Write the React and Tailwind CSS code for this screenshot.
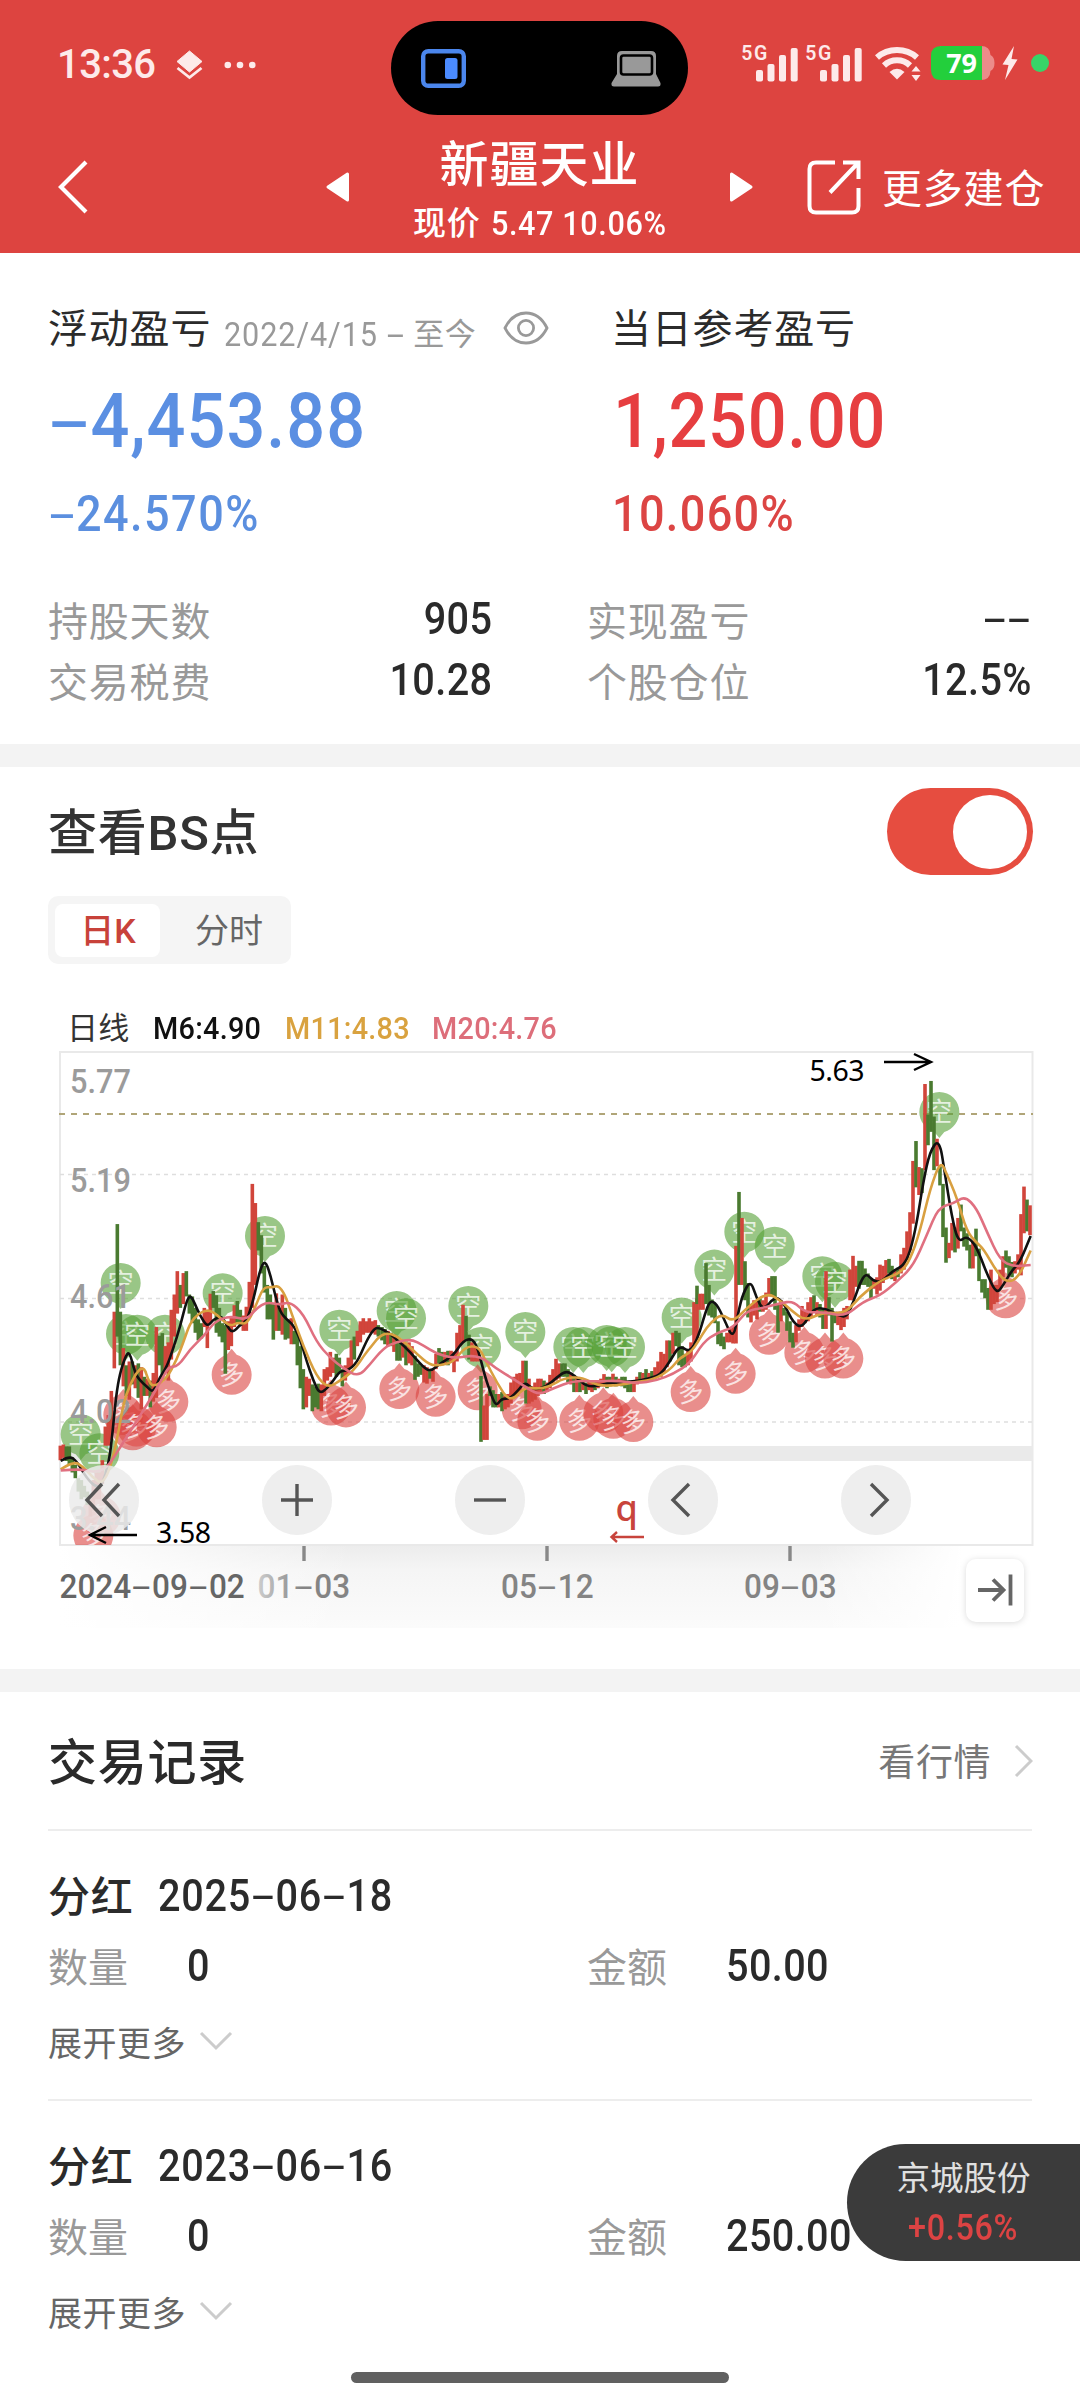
import React from "react";

const CJK = "font-['Roboto','Noto_Sans_CJK_SC',sans-serif]";

/* Numeric text, narrowed and with the wide hyphens of a DIN-style face. */
function Num({ children, className = "" }) {
  const parts = String(children).split("-");
  return (
    <span className={"block origin-left scale-x-[0.9] whitespace-nowrap font-medium leading-none tracking-[0.01em] " + className}>
      {parts.map((p, i) => (
        <React.Fragment key={i}>
          {i > 0 && <span className="inline-block w-[0.62em] scale-x-[2.05] text-center font-normal tracking-normal">-</span>}
          {p}
        </React.Fragment>
      ))}
    </span>
  );
}

function Signal() {
  return (
    <svg width="57" height="38" viewBox="0 0 57 38" fill="#fdeaea" className="shrink-0 overflow-visible">
      <text x="-0.8" y="15.5" fontSize="19.5" fontWeight="600" fontFamily="Roboto" textLength="26">5G</text>
      <rect x="14" y="26" width="7" height="11.5" rx="2" />
      <rect x="25.5" y="20" width="7" height="17.5" rx="2" />
      <rect x="37" y="11" width="7" height="26.5" rx="2" />
      <rect x="48.7" y="4" width="7" height="33.5" rx="2" />
    </svg>
  );
}

function StatusBar() {
  return (
    <div className="relative flex h-[130px] items-start pt-[43px]">
      <div className="ml-[57px] flex h-[44px] items-center">
        <span className="w-[100px] whitespace-nowrap text-[40px] font-medium leading-none tracking-[-0.015em] text-[#fdeaea]">13:36</span>
        <svg width="27" height="30" viewBox="0 0 27 30" className="ml-[19px]" fill="none">
          <path d="M13.5 1 L26 11.5 L13.5 22 L1 11.5 Z" fill="#fdeaea" stroke="#fdeaea" strokeLinejoin="round" />
          <path d="M1.5 18 L13.5 27.5 L25.5 18" stroke="#fdeaea" strokeWidth="2.8" />
        </svg>
        <svg width="32" height="8" viewBox="0 0 32 8" className="ml-[21px]" fill="#fdeaea">
          <circle cx="3.8" cy="4" r="3.3" /><circle cx="16" cy="4" r="3.3" /><circle cx="28.3" cy="4" r="3.3" />
        </svg>
      </div>
      <div className="absolute left-[391px] top-[21px] flex h-[94px] w-[297px] items-center justify-between rounded-full bg-black pl-[30px] pr-[27px]">
        <svg width="45" height="39" viewBox="0 0 45 39">
          <rect x="2.2" y="2.2" width="40.6" height="34.6" rx="5" fill="none" stroke="#4b86ec" strokeWidth="4.4" />
          <rect x="24" y="9" width="12.5" height="21" rx="2.5" fill="#4b8bff" />
        </svg>
        <svg width="50" height="37" viewBox="0 0 50 37">
          <path d="M6 24 V6 Q6 1 11 1 H40 Q45 1 45 6 V24 L49.5 33 Q50 36.5 47 36.5 H3 Q0 36.5 .5 33 Z" fill="#999" />
          <rect x="10" y="5.5" width="31" height="19" rx="2.5" fill="#999" stroke="#000" strokeWidth="2.6" />
        </svg>
      </div>
      <div className="ml-auto mr-[31px] mt-[1px] flex h-[38px] items-center">
        <Signal />
        <div className="w-[7px]" />
        <Signal />
        <svg width="46" height="36" viewBox="0 0 46 36" className="ml-[12px]" fill="none" stroke="#fdeaea">
          <path d="M2 12.5 A29 27 0 0 1 42 12.5" strokeWidth="6" />
          <path d="M9 20.5 A19 19 0 0 1 35 20.5" strokeWidth="6" />
          <path d="M14.5 27 Q22 20.5 29.5 27 L22 34.5 Z" fill="#fdeaea" stroke="none" />
          <path d="M36.5 26.5 L41 21 L45.5 26.5 Z M36.5 30 L41 36 L45.5 30 Z" fill="#fdeaea" stroke="none" />
        </svg>
        <svg width="64" height="36" viewBox="0 0 64 36" className="ml-[10px]">
          <path d="M9 1 H50 Q59 1 59.5 10 Q63.5 12 63.5 18 Q63.5 24 59.5 26 Q59 35 50 35 H9 Z" fill="#ec8c8a" />
          <path d="M10 1 H51 V35 H10 Q0 35 0 25 V11 Q0 1 10 1 Z" fill="#23cf3c" />
          <text x="30.5" y="28" textAnchor="middle" fontFamily="Noto Sans" fontWeight="700" fontSize="27" letterSpacing="-0.3" fill="#fff">79</text>
        </svg>
        <svg width="16" height="34" viewBox="0 0 16 34" className="ml-[7px]" fill="#fdeaea">
          <path d="M12 0 L0.5 18.5 L6.5 19 L3 34 L15.5 13.5 L9.5 13 Z" />
        </svg>
        <div className="ml-[13px] size-[18px] rounded-full bg-[#38d468]" />
      </div>
    </div>
  );
}

function NavBar() {
  return (
    <div className="flex h-[123px] text-white">
      <svg width="30" height="54" viewBox="0 0 30 54" className="ml-[58px] mt-[30px] shrink-0" fill="none" stroke="#fff" strokeWidth="4.2">
        <path d="M28 2 L3 27 L28 52" />
      </svg>
      <svg width="24" height="30" viewBox="0 0 24 30" className="ml-[238px] mt-[42px] shrink-0" fill="#fff" stroke="#fff" strokeWidth="3" strokeLinejoin="round">
        <path d="M2 15 L21.5 2 V28 Z" />
      </svg>
      <div className="flex w-[379px] shrink-0 flex-col items-center">
        <div className="mt-[11px] text-[49px] font-medium leading-none tracking-[0.02em]">新疆天业</div>
        <div className="mt-[16px] flex w-[253px] items-center whitespace-nowrap text-[33px] leading-none">
          <span className="w-[78px] shrink-0 pt-[1px] font-medium tracking-[0.02em]">现价</span>
          <Num className="text-[34px] !tracking-[0.02em]">5.47 10.06%</Num>
        </div>
      </div>
      <svg width="24" height="30" viewBox="0 0 24 30" className="mt-[42px] shrink-0" fill="#fff" stroke="#fff" strokeWidth="3" strokeLinejoin="round">
        <path d="M22 15 L2.5 2 V28 Z" />
      </svg>
      <svg width="54" height="55" viewBox="0 0 54 55" className="ml-[54px] mt-[30px] shrink-0" fill="none" stroke="#fff" strokeWidth="4">
        <path d="M28 2.5 H9 Q2.5 2.5 2.5 9 V46 Q2.5 52.5 9 52.5 H45 Q51.5 52.5 51.5 46 V28" />
        <path d="M36 2.5 H51.5 V19 M51 3 L23 32.5" />
      </svg>
      <div className="ml-[21px] mt-[40px] whitespace-nowrap text-[40px] leading-none tracking-[0.02em]">更多建仓</div>
    </div>
  );
}

function Stat({ label, value }) {
  return (
    <div className="flex h-[61px] items-center justify-between">
      <span className="pt-[4px] text-[40px] leading-none tracking-[0.02em] text-[#999]">{label}</span>
      <Num className="!origin-right pb-[3px] text-[44px] text-[#2a2a2a]">{value}</Num>
    </div>
  );
}

function Summary() {
  return (
    <section className="h-[491px] pl-[48px] pr-[48px] pt-[53px] text-[#2b2b2b]">
      <div className="flex h-[48px] items-center">
        <div className="flex w-[563px] items-center">
          <span className="text-[40px] leading-none tracking-[0.02em]">浮动盈亏</span>
          <span className="ml-[13px] flex items-center pt-[8px] text-[#999]">
            <Num className="w-[189px] text-[34px] !font-normal !tracking-[0.03em]">2022/4/15 -</Num>
            <span className="text-[31px] leading-none tracking-[0.02em]">至今</span>
          </span>
          <svg width="46" height="34" viewBox="0 0 46 34" className="mb-[4px] ml-[27px]" fill="none" stroke="#999" strokeWidth="2.8">
            <path d="M2 17 C12 -3 34 -3 44 17 C34 37 12 37 2 17 Z" />
            <circle cx="23" cy="17" r="7.6" />
          </svg>
        </div>
        <span className="text-[40px] leading-none tracking-[0.02em]">当日参考盈亏</span>
      </div>
      <div className="mt-[29px] flex h-[76px] items-center">
        <Num className="w-[565px] text-[76px] !tracking-[0.015em] text-[#5b8fe2]">-4,453.88</Num>
        <Num className="text-[76px] text-[#e63e40]">1,250.00</Num>
      </div>
      <div className="mt-[30px] flex h-[50px] items-center">
        <Num className="w-[564px] text-[50px] !tracking-[0.033em] text-[#5b8fdf]">-24.570%</Num>
        <Num className="text-[50px] !tracking-[0.03em] text-[#dc4544]">10.060%</Num>
      </div>
      <div className="mt-[51px] grid grid-cols-[444px_445px] gap-x-[95px]">
        <Stat label="持股天数" value="905" />
        <Stat label="实现盈亏" value="--" />
        <Stat label="交易税费" value="10.28" />
        <Stat label="个股仓位" value="12.5%" />
      </div>
    </section>
  );
}

/* ---------- K-line chart ---------- */

const KX = 3;
const KY = 2.613;

const CANDLES = [
  [61, "1060-1098r 1057-1092r 1062-1100g 1062-1108g 1090-1130g 1110-1145g 1145-1180g 1150-1200g 1165-1195g 1180-1215g 1200-1245r 1150-1230r 1130-1200r 1130-1200r 1098-1160r 1010-1060r 980-1060r 917-1045r 710-858r 481-775g 710-850g 805-905r 850-930g 840-940r 840-900g 850-910r 845-935g 855-965r 880-930g 885-930r 890-960g 870-945r 750-935r 772-850g 766-885g 800-870r 790-890r 705-835r 665-775r 604-715r 640-700g 609-690r 604-670g 665-715g 670-740g 700-765g 730-785g 740-780g 700-750r 705-805r 663-740r 656-700g 667-765g 700-775g 740-790g 745-872g 735-810r 725-800r 693-750r 682-740g 705-745g 720-760r 697-760r 632-720r 376-700r 426-640r 476-550g 510-610g 590-660g 640-730g 665-730g 690-783g 662-760r 700-760g 665-770r 700-783g 730-780g 727-795r 760-795g 765-850g 800-910g 860-965g 880-960r 885-930r 900-970g 905-960g 898-965g 900-970r 860-930r 855-890r 815-880r 830-870r 820-880g 830-870g 860-905g 850-890r 830-875r 785-855r 775-835g 760-800r 735-790r 727-770r 735-765r 727-765r 735-765r 732-770r 745-775g"],
  [1026, "750-785g 755-795g 760-800r 765-800g 770-815r 775-838g 785-838g 790-830r 795-850g 790-845r 800-850r 825-888g 845-880g 850-875g 850-895r 855-898r 860-885g 860-893r 820-860r 805-845g 815-850g 815-845r 812-850g 812-840r 815-868r 765-840r 745-800r 692-790r 720-785g 770-835g 790-840r 800-840r 805-840r 878-1050g 955-1045r 925-1045r 905-930g 915-960g 925-960g 925-960r 920-970g 930-965r 925-960r 895-950r 880-930r 872-930r 870-920r 838-900r 838-950g 885-950r 905-945r 895-940r 885-930r 885-925r 890-925g 895-920r 875-910r 860-900r 833-890r 845-885r 845-880g 845-880g 860-895g 870-900r 875-920g 885-920r 885-920g 890-915r 895-925g 890-915r 895-920r 890-915g 890-910r 885-905r 873-905r 880-910g 880-905g 872-900r 880-905g 885-900r 880-905g 880-910g 890-920g 895-920g 890-920r 880-900r 868-890g 870-890r 860-890g 870-890r 865-890g 855-885r 840-880r 815-880r 820-870r 785-855r 785-840g 765-820r 760-800g 765-850g 800-855g 820-855g 810-850r 790-840r 685-795r 675-780r"],
  [1971, "642-690g 663-705r 663-705r 583-690g 640-720g 678-725g 690-740g 735-795g 765-800g 775-808g 765-790r 755-790r 750-793r 538-793r 397-640g 465-640r 578-680g 635-725g 690-738r 680-720r 680-730r 675-710g 680-710r 660-705r 622-670r 617-670g 617-705g 690-765g 680-735r 700-720g 710-760g 735-790g 765-804g 745-790r 730-760r 695-750r 705-740r 685-735r 672-725r 667-710g 685-720r 690-725g 700-755g 604-755r 672-720g 700-788g 710-740g 710-745r 710-758r 700-750r 695-730r 600-680r 564-680r 590-645r 577-650g 577-640g 597-640g 610-645g 625-675g 625-650r 620-665r 587-655r 590-635r 575-625r 572-610g 590-625g 600-630r 595-620g 560-610r 543-600r 500-575r 450-550r 316-480r 264-385g 332-405r 335-400g 115-340r 195-275g 107-240g 200-340g 258-330r 330-380g 376-515g 490-582g 530-570r 478-550r 490-555g 465-545r 430-500g 490-540g 505-550g 535-597g 525-597r 493-565g 545-630g 625-660g 625-675g 648-705g 600-705r 640-690r 640-685r 600-650r 565-620r 550-595g 565-615g 580-620g 578-610r 560-600r 455-615r 383-505r 417-500g 432-510r"],
];

const AVERAGES = [
  { color: "#111111", pts: [
    [0, "62,1100 88,1087 110,1100 140,1145 170,1170 187,1160 205,1110 215,1050 228,930 240,870 255,830 268,812 285,870 300,890 320,905 340,922 360,880 380,855 400,805 420,750 440,680 452,667 465,690 480,720 502,750 520,730 545,721 560,745 577,766 600,745 620,735 640,680 660,600 675,575 690,610 705,665 720,710 740,730 760,745 780,780 800,840 820,890 838,924 860,912 880,890 900,865 920,865 950,845 980,785 1000,757"],
    [990, "25,750 60,768 90,790 120,815 160,855 182,866 210,845 250,825 280,785 308,780 325,810 345,880 365,930 378,957 395,937 420,937 445,915 465,893 490,915 530,905 560,882 590,863 620,882 650,906 690,903 720,895 790,893 840,884 870,875 900,840 928,797 960,817 985,775 1005,715"],
    [1980, "30,680 50,690 70,725 100,784 115,710 130,660 152,628 170,675 190,707 225,670 250,685 280,740 308,752 340,700 380,702 415,720 440,724 460,685 480,635 498,609 520,630 545,632 580,602 610,590 630,555 650,480 670,370 690,290 718,258 735,350 755,460 775,530 800,511 830,540 860,610 890,664 910,640 935,603 960,580 992,512"],
  ] },
  { color: "#d9a040", pts: [
    [0, "62,1122 100,1100 130,1115 160,1145 187,1160 210,1120 230,1050 250,950 270,900 295,862 313,856 325,890 340,907 380,885 410,835 430,790 450,740 475,715 500,706 520,710 545,730 570,748 595,738 620,743 645,700 670,645 695,647 715,641 735,665 755,715 790,800 830,880 865,909 900,890 940,865 980,815"],
    [990, "0,805 30,772 60,765 100,785 140,820 180,850 210,850 250,842 285,802 325,800 345,835 380,895 420,948 465,906 500,912 540,905 580,884 635,880 680,903 740,903 800,893 850,888 900,862 930,830 965,815 1000,765"],
    [1980, "30,740 65,715 100,737 140,700 200,660 240,680 275,707 315,734 370,711 435,716 480,670 540,628 600,610 630,575 660,500 690,390 722,315 740,350 770,410 800,500 830,530 850,545 890,605 920,634 955,622 992,550"],
  ] },
  { color: "#e07080", pts: [
    [0, "62,1125 120,1120 160,1130 200,1120 240,1065 280,1010 330,940 370,880 385,855 415,852 450,808 490,775 525,735 570,721 620,732 650,700 680,685 720,692 750,684 790,715 830,790 870,830 910,858 955,880"],
    [990, "0,848 40,805 80,788 125,782 160,798 200,820 250,832 325,822 380,860 430,885 480,915 510,926 550,910 610,890 680,892 740,890 800,897 860,890 910,872 960,845 1000,790"],
    [1980, "50,765 100,752 140,707 190,700 240,688 280,682 315,713 370,710 435,723 490,683 540,668 590,632 640,590 680,510 715,438 760,427 795,408 830,440 860,500 900,575 940,592 992,588"],
  ] },
];

const SHORT_MARKS = [
  [122, 1030], [178, 1080], [242, 635], [258, 768], [375, 770], [292, 770], [548, 662], [675, 512], [898, 757],
  [1070, 708], [1098, 727], [1285, 695], [1323, 802], [1456, 763], [1600, 802], [1630, 802], [1700, 797], [1715, 800], [1755, 802], [1925, 725],
  [2023, 600], [2113, 501], [2204, 540], [2347, 617], [2385, 632], [2698, 188],
];
const LONG_MARKS = [
  [182, 1245], [160, 1295], [250, 980], [278, 1020], [290, 1010], [385, 945], [350, 1012], [575, 875], [873, 955], [918, 960],
  [1078, 912], [1187, 932], [1313, 915], [1445, 965], [1492, 995], [1618, 995], [1690, 975], [1720, 990], [1780, 998], [1952, 920],
  [2087, 872], [2187, 770], [2293, 817], [2355, 832], [2410, 832], [2897, 675],
];

function smooth(groups) {
  const p = groups.flatMap(([off, s]) => s.split(" ").map((q) => {
    const [x, y] = q.split(",").map(Number);
    return [(x + off) / KX, y / KY];
  }));
  let d = `M${p[0][0]} ${p[0][1]}`;
  for (let i = 1; i < p.length - 1; i++) {
    const mx = (p[i][0] + p[i + 1][0]) / 2;
    const my = (p[i][1] + p[i + 1][1]) / 2;
    d += `Q${p[i][0]} ${p[i][1]} ${mx} ${my}`;
  }
  const l = p[p.length - 1];
  return d + `L${l[0]} ${l[1]}`;
}

function Mark({ x, y, up }) {
  const color = up ? "#da433f" : "#55a035";
  const s = up ? -1 : 1;
  return (
    <g transform={`translate(${x / KX} ${y / KY})`}>
      <path
        transform={`scale(1 ${s})`}
        d="M-20 0 A20 20 0 1 1 20 0 C20 9 14 17 5 20 L0 26 L-5 20 C-14 17 -20 9 -20 0 Z"
        fill={color}
        opacity="0.6"
      />
      <text y="9" textAnchor="middle" fontSize="26" fill="#fff" fillOpacity="0.75" fontFamily="Noto Sans CJK SC" transform={up ? "rotate(-8)" : undefined}>
        {up ? "多" : "空"}
      </text>
    </g>
  );
}

function RoundButton({ cx, children }) {
  return (
    <g transform={`translate(${cx} 460)`}>
      <circle r="35" fill="#ebebeb" fillOpacity="0.78" />
      <circle r="35" fill="#ebebeb" fillOpacity="0.3" />
      <g fill="none" stroke="#555" strokeWidth="3.4">{children}</g>
    </g>
  );
}

function PriceLabel({ y, children }) {
  return (
    <text x="30" y={y} textLength="61" lengthAdjust="spacingAndGlyphs">{children}</text>
  );
}

function Chart() {
  return (
    <svg width="1040" height="600" viewBox="0 0 1040 600" className="block" fontFamily="Roboto">
      <defs>
        <linearGradient id="axisV" x1="0" y1="0" x2="0" y2="1">
          <stop offset="0" stopColor="#ececec" />
          <stop offset="0.3" stopColor="#f5f5f5" />
          <stop offset="1" stopColor="#fbfbfb" />
        </linearGradient>
        <linearGradient id="axisH" x1="0" y1="0" x2="1" y2="0">
          <stop offset="0" stopColor="#fff" />
          <stop offset="0.32" stopColor="#fff" stopOpacity="0" />
          <stop offset="0.82" stopColor="#fff" stopOpacity="0" />
          <stop offset="0.98" stopColor="#fff" />
        </linearGradient>
        <linearGradient id="dateFade" gradientUnits="userSpaceOnUse" x1="216" y1="0" x2="262" y2="0">
          <stop offset="0" stopColor="#d0d0d0" />
          <stop offset="1" stopColor="#848484" />
        </linearGradient>
        <clipPath id="plot"><rect x="14" y="11" width="979" height="494" /></clipPath>
      </defs>
      <rect x="20" y="505" width="920" height="83" fill="url(#axisV)" />
      <rect x="19" y="505" width="922" height="84" fill="url(#axisH)" />
      <rect x="20" y="12" width="972.5" height="493" fill="#fff" stroke="#e9e9e9" strokeWidth="2" />
      {[134.5, 258.5, 382].map((y) => (
        <line key={y} x1="20" x2="992" y1={y} y2={y} stroke="#dedede" strokeWidth="1.4" strokeDasharray="4 4" />
      ))}
      <line x1="19" x2="993" y1="74" y2="74" stroke="#b0a578" strokeWidth="2" strokeDasharray="6 6" />
      <rect x="19" y="406" width="974" height="15" fill="#eaeaea" />
      <g clipPath="url(#plot)">
        {SHORT_MARKS.map(([x, y], i) => <Mark key={i} x={x} y={y} />)}
        {LONG_MARKS.map(([x, y], i) => <Mark key={i} x={x} y={y} up />)}
        {CANDLES.map(([start, s]) => s.split(" ").map((c, i) => {
          const [a, b] = c.slice(0, -1).split("-").map(Number);
          return (
            <rect key={start + "-" + i} x={(start + i * 9) / KX - 1.8} y={a / KY} width="3.6" height={(b - a) / KY} fill={c.endsWith("r") ? "#d1453b" : "#4a7a30"} />
          );
        }))}
      </g>
      <g fontSize="33.5" fontWeight="500" fill="#9b9b9b">
        <PriceLabel y={53}>5.77</PriceLabel>
        <PriceLabel y={152}>5.19</PriceLabel>
        <PriceLabel y={267.5}>4.61</PriceLabel>
        <PriceLabel y={383}>4.02</PriceLabel>
        <PriceLabel y={490}>3.44</PriceLabel>
      </g>
      {AVERAGES.map((m) => (
        <path key={m.color} d={smooth(m.pts)} fill="none" stroke={m.color} strokeWidth="2.6" strokeLinejoin="round" />
      ))}

      <RoundButton cx={64}><path d="M-2 -16 L-17 0 L-2 16 M15 -16 L0 0 L15 16" /></RoundButton>
      <RoundButton cx={257}><path d="M-16 0 H16 M0 -16 V16" /></RoundButton>
      <RoundButton cx={450}><path d="M-16 0 H16" /></RoundButton>
      <RoundButton cx={643}><path d="M6 -16 L-10 0 L6 16" /></RoundButton>
      <RoundButton cx={836}><path d="M-5 -16 L11 0 L-5 16" /></RoundButton>

      <g fill="none" stroke="#000" strokeWidth="2.4">
        <path d="M97 495 H50 M66 487 L50 495 L66 503" />
        <path d="M844 22 H891 M874 14 L891 22 L874 30" />
      </g>
      <g fontSize="28.5" fill="#000" fontFamily="Noto Sans">
        <text x="116" y="503" textLength="55">3.58</text>
        <text x="769.5" y="40.5" textLength="55">5.63</text>
      </g>
      <text x="575.5" y="480.5" fontSize="36" fontWeight="500" fill="#c8443c" fontFamily="Noto Sans">q</text>
      <path d="M604 497 H572 M577 492 L571.5 497 L577 502" fill="none" stroke="#c8443c" strokeWidth="2.4" />

      <g fill="#888">
        <rect x="262.3" y="506" width="3.4" height="15" />
        <rect x="505.3" y="506" width="3.4" height="15" />
        <rect x="748.3" y="506" width="3.4" height="15" />
      </g>
      <AxisDate x={19.5} text="2024-09-02" fill="#666" />
      <AxisDate x={217.5} text="01-03" fill="url(#dateFade)" />
      <AxisDate x={461} text="05-12" fill="#848484" />
      <AxisDate x={704} text="09-03" fill="#848484" />

      <rect x="926" y="519" width="58" height="63" rx="10" fill="#fff" className="drop-shadow-[0_1px_3px_rgba(0,0,0,0.14)]" />
      <g fill="none" stroke="#666" strokeWidth="3.8">
        <path d="M938 550 H963 M953 539.5 L963.5 550 L953 560.5 M970.5 534.5 V565.5" />
      </g>
    </svg>
  );
}

/* Axis date whose hyphens are as wide as its digits. */
function AxisDate({ x, text, fill }) {
  let at = x;
  return (
    <g fontSize="33" fontWeight="500" fill={fill}>
      {text.split("-").map((p, i) => {
        const start = at;
        const width = p.length * 17.9;
        at += width + 21;
        return (
          <React.Fragment key={i}>
            {i > 0 && (
              <text x={start - 20} y="557.5" textLength="18.5" lengthAdjust="spacingAndGlyphs" fontWeight="400">-</text>
            )}
            <text x={start} y="557.5" textLength={width} lengthAdjust="spacingAndGlyphs">{p}</text>
          </React.Fragment>
        );
      })}
    </g>
  );
}

function ChartSection() {
  return (
    <section className="h-[902px] text-[#333]">
      <div className="flex h-[129px] items-center justify-between pl-[48px] pr-[47px]">
        <span className="pt-[4px] text-[49px] font-medium leading-none tracking-[0.015em]">查看BS点</span>
        <div className="flex h-[87px] w-[146px] items-center justify-end rounded-full bg-[#e64d40] pr-[6px]">
          <div className="size-[74px] rounded-full bg-white" />
        </div>
      </div>
      <div className="ml-[48px] flex h-[68px] w-[243px] items-center rounded-[10px] bg-[#f5f5f5] pl-[7px] text-[34px] leading-none">
        <div className="flex h-[53px] w-[105px] items-center justify-center rounded-[8px] bg-white pl-[1px] pt-[2px] font-medium text-[#c8423a]">日K</div>
        <div className="flex-1 pl-[7px] pt-[2px] text-center text-[#666]">分时</div>
      </div>
      <div className="ml-[67px] flex h-[76px] items-end text-[32px] leading-none">
        <div className="flex h-[25px] items-center">
          <span className="w-[86px] pt-[1px] text-[31px] tracking-[0.01em]">日线</span>
          <Num className="w-[132px] text-[32px] text-[#111]">M6:4.90</Num>
          <Num className="w-[147px] text-[32px] text-[#d9a23f]">M11:4.83</Num>
          <Num className="text-[32px] text-[#dd6e7a]">M20:4.76</Num>
        </div>
      </div>
      <div className="ml-[40px]">
        <Chart />
      </div>
    </section>
  );
}

function TradeRecord({ date, amount }) {
  return (
    <div className="mx-[48px] h-[270px] border-t-2 border-[#ededed] pt-[42px]">
      <div className="flex h-[46px] items-center text-[#2b2b2b]">
        <span className="w-[110px] pt-[3px] text-[42px] font-medium leading-none tracking-[0.02em]">分红</span>
        <Num className="text-[44px] !tracking-[0.018em]">{date}</Num>
      </div>
      <div className="mt-[22px] flex h-[50px] items-center">
        <span className="w-[139px] pt-[6px] text-[40px] leading-none text-[#999]">数量</span>
        <Num className="w-[400px] text-[44px] text-[#2a2a2a]">0</Num>
        <span className="w-[139px] pt-[6px] text-[40px] leading-none text-[#999]">金额</span>
        <Num className="text-[44px] text-[#2a2a2a]">{amount}</Num>
      </div>
      <div className="mt-[29px] flex h-[40px] items-center text-[34px] leading-none text-[#666]">
        <span className="pt-[7px] tracking-[0.015em]">展开更多</span>
        <svg width="34" height="20" viewBox="0 0 34 20" className="ml-[13px] mt-[2px]" fill="none" stroke="#ccc" strokeWidth="3">
          <path d="M2 2 L17 17 L32 2" />
        </svg>
      </div>
    </div>
  );
}

function Records() {
  return (
    <section>
      <div className="flex h-[137px] items-center justify-between pl-[48px] pr-[47px]">
        <span className="pt-[6px] text-[49px] font-medium leading-none tracking-[0.015em] text-[#2a2a2a]">交易记录</span>
        <div className="flex items-center text-[37px] leading-none text-[#777]">
          <span className="pt-[5px] tracking-[0.015em]">看行情</span>
          <svg width="19" height="34" viewBox="0 0 19 34" className="ml-[23px]" fill="none" stroke="#ccc" strokeWidth="3">
            <path d="M2 2 L17 17 L2 32" />
          </svg>
        </div>
      </div>
      <TradeRecord date="2025-06-18" amount="50.00" />
      <TradeRecord date="2023-06-16" amount="250.00" />
    </section>
  );
}

export default function App() {
  return (
    <div className={"relative h-[2400px] w-[1080px] overflow-hidden bg-white " + CJK}>
      <header className="h-[253px] bg-[#dd4440]">
        <StatusBar />
        <NavBar />
      </header>
      <Summary />
      <div className="h-[23px] bg-[#f3f3f3]" />
      <ChartSection />
      <div className="h-[23px] bg-[#f3f3f3]" />
      <Records />
      <div className="absolute left-[847px] top-[2144px] flex h-[117px] w-[233px] flex-col items-center rounded-l-full bg-[#3b3b3b] pt-[18px]">
        <span className="text-[33.5px] leading-none text-[#e0e0e0]">京城股份</span>
        <Num className="mt-[14px] !origin-center text-[36px] !tracking-[0.02em] text-[#dc4343]">+0.56%</Num>
      </div>
      <div className="absolute left-[351px] top-[2372px] h-[11px] w-[378px] rounded-full bg-[#606060]" />
    </div>
  );
}
